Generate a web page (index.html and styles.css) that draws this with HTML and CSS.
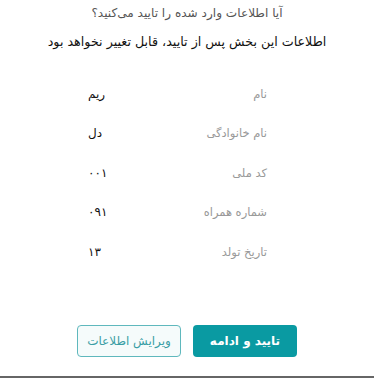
FILE: index.html
```html
<!DOCTYPE html>
<html lang="fa" dir="rtl">
<head>
<meta charset="utf-8">
<link rel="stylesheet" href="styles.css">
</head>
<body>
<div class="sheet">
  <div class="head">
    <p class="q">آیا اطلاعات وارد شده را تایید می‌کنید؟</p>
    <p class="note">اطلاعات این بخش پس از تایید، قابل تغییر نخواهد بود</p>
  </div>
  <div class="list">
    <div class="row"><span class="label">نام</span><span class="val">ریم</span></div>
    <div class="row"><span class="label">نام خانوادگی</span><span class="val">دل</span></div>
    <div class="row"><span class="label">کد ملی</span><span class="val">۰۰۱</span></div>
    <div class="row"><span class="label">شماره همراه</span><span class="val">۰۹۱</span></div>
    <div class="row"><span class="label">تاریخ تولد</span><span class="val">۱۳</span></div>
  </div>
  <div class="actions">
    <button class="btn primary">تایید و ادامه</button>
    <button class="btn outline">ویرایش اطلاعات</button>
  </div>
</div>
</body>
</html>
```
FILE: styles.css
```css
html, body { margin: 0; padding: 0; background: #fff; }
body { font-family: "DejaVu Sans", sans-serif; }
.sheet {
  width: 374px;
  height: 378px;
  border-bottom: 2px solid #666;
  box-sizing: border-box;
  display: flex;
  flex-direction: column;
}
.head { text-align: center; padding-top: 4px; }
.q { margin: 0; font-size: 12.1px; color: #555; line-height: 18px; }
.note { margin: 11px 0 0; font-size: 12.7px; color: #111; line-height: 18px; }
.list { padding: 23px 107px 0 88px; display: flex; flex-direction: column; }
.row { display: flex; justify-content: space-between; align-items: center; height: 39.5px; }
.label { font-size: 11.5px; color: #999; }
.val { font-size: 12px; color: #111; }
.actions { margin-top: auto; margin-bottom: 19px; display: flex; justify-content: center; gap: 12px; }
.btn {
  font-family: "DejaVu Sans", sans-serif;
  font-size: 12px;
  height: 32px;
  width: 104px;
  border-radius: 4px;
  box-sizing: border-box;
}
.primary { background: #0a9aa2; color: #fff; border: none; font-weight: bold; }
.outline { background: #f5fbfb; color: #3a9ea5; border: 1px solid #5fb8bd; }
```
